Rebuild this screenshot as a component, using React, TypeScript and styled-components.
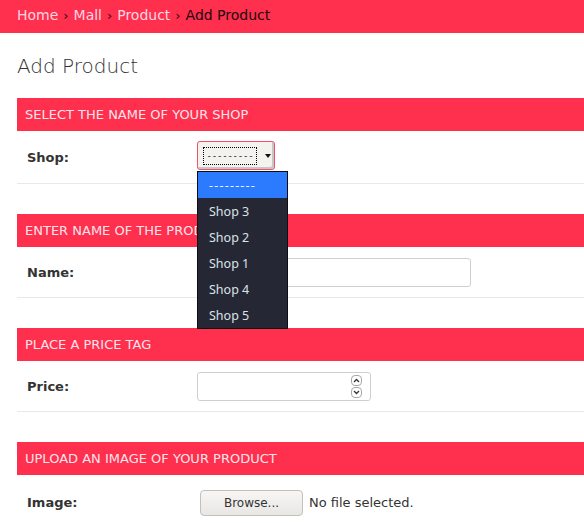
import React from "react";
import styled, { createGlobalStyle } from "styled-components";

const Global = createGlobalStyle`
  html, body { margin: 0; padding: 0; background: #fff; overflow: hidden; }
  body { font-family: "DejaVu Sans", sans-serif; color: #333; }
`;

const RED = "#ff2f4e";

const Breadcrumb = styled.nav`
  height: 33px;
  box-sizing: border-box;
  padding: 0 0 3px 17px;
  background: ${RED};
  display: flex;
  align-items: center;
  font-size: 14px;
  color: #ffd6e0;
`;

const Sep = styled.span`
  color: #3a0b14;
  font-size: 13px;
  margin: 0 5px;
`;

const Current = styled.span`
  color: #1b0a0e;
`;

const Main = styled.main`
  padding-left: 17px;
`;

const Title = styled.h1`
  margin: 0;
  padding: 20px 0 19px;
  font-size: 20px;
  font-weight: 200;
  color: #333;
  line-height: 26px;
  height: 26px;
`;

const Section = styled.section`
  margin-bottom: 30px;
`;

const Band = styled.div`
  height: 33px;
  background: ${RED};
  color: #fde4ea;
  font-size: 13px;
  display: flex;
  align-items: center;
  padding-left: 8px;
`;

const Row = styled.div<{ $h: number }>`
  display: flex;
  align-items: center;
  height: ${(p) => p.$h}px;
  border-bottom: 1px solid #e8e8e8;
`;

const Label = styled.label`
  width: 180px;
  padding-left: 10px;
  box-sizing: border-box;
  font-weight: bold;
  font-size: 13px;
  color: #333;
`;

const SelectWrap = styled.div`
  position: relative;
  align-self: flex-start;
  margin-top: 10px;
`;

const SelectBox = styled.div`
  width: 78px;
  height: 29px;
  box-sizing: border-box;
  border: 1px solid #f0506e;
  border-radius: 3px;
  background: #f4f2ef;
  box-shadow: inset -2px -2px 0 #c9c7c4;
  display: flex;
  align-items: center;
  padding-left: 5px;
`;

const Focus = styled.div`
  width: 54px;
  height: 18px;
  box-sizing: border-box;
  border: 1px dotted #000;
  display: flex;
  align-items: center;
  justify-content: center;
  font-family: "DejaVu Sans Mono", monospace;
  font-size: 9px;
  letter-spacing: -0.2px;
  color: #111;
`;

const Arrow = styled.span`
  margin-left: 8px;
  width: 0;
  height: 0;
  border-left: 3px solid transparent;
  border-right: 3px solid transparent;
  border-top: 4px solid #111;
`;

const Menu = styled.ul`
  position: absolute;
  left: 0;
  top: 30px;
  width: 91px;
  margin: 0;
  padding: 0;
  list-style: none;
  background: #252834;
  border: 1px solid #0c0d12;
  box-sizing: border-box;
  z-index: 5;
  font-family: "Noto Sans", sans-serif;
  font-size: 12.5px;
`;

const Option = styled.li<{ $active?: boolean }>`
  height: 26px;
  display: flex;
  align-items: center;
  padding-left: 11px;
  color: ${(p) => (p.$active ? "#eef4ff" : "#dbe2ea")};
  background: ${(p) => (p.$active ? "#2c7bff" : "transparent")};
  letter-spacing: ${(p) => (p.$active ? "1.2px" : "0")};
`;

const TextInput = styled.div<{ $w: number }>`
  width: ${(p) => p.$w}px;
  height: 29px;
  box-sizing: border-box;
  border: 1px solid #cfcfcf;
  border-radius: 3px;
  background: #fff;
  display: flex;
  justify-content: flex-end;
  align-items: center;
  padding-right: 8px;
`;

const Spinner = styled.div`
  display: flex;
  flex-direction: column;
  gap: 1px;
`;

const SpinBtn = styled.span`
  width: 11px;
  height: 11px;
  box-sizing: border-box;
  border: 1px solid #a8a8a8;
  border-radius: 4px;
  display: flex;
  align-items: center;
  justify-content: center;
`;

const Browse = styled.button`
  margin-left: 3px;
  width: 103px;
  height: 26px;
  border: 1px solid #c3c0bb;
  border-radius: 4px;
  background: linear-gradient(#f7f6f4, #e9e7e4);
  font-family: "DejaVu Sans", sans-serif;
  font-size: 12px;
  color: #333;
  padding: 0;
`;

const FileText = styled.span`
  margin-left: 6px;
  font-size: 13px;
  color: #333;
`;

const Chev = ({ up }: { up?: boolean }) => (
  <svg width="7" height="5" viewBox="0 0 7 5">
    <path
      d={up ? "M1 4 L3.5 1.5 L6 4" : "M1 1 L3.5 3.5 L6 1"}
      fill="none"
      stroke="#333"
      strokeWidth="1.3"
    />
  </svg>
);

export default function App() {
  return (
    <>
      <Global />
      <Breadcrumb>
        <span>Home</span>
        <Sep>›</Sep>
        <span>Mall</span>
        <Sep>›</Sep>
        <span>Product</span>
        <Sep>›</Sep>
        <Current>Add Product</Current>
      </Breadcrumb>
      <Main>
        <Title>Add Product</Title>
        <Section>
          <Band>SELECT THE NAME OF YOUR SHOP</Band>
          <Row $h={52}>
            <Label>Shop:</Label>
            <SelectWrap>
              <SelectBox>
                <Focus>---------</Focus>
                <Arrow />
              </SelectBox>
              <Menu>
                <Option $active>---------</Option>
                <Option>Shop 3</Option>
                <Option>Shop 2</Option>
                <Option>Shop 1</Option>
                <Option>Shop 4</Option>
                <Option>Shop 5</Option>
              </Menu>
            </SelectWrap>
          </Row>
        </Section>
        <Section>
          <Band>ENTER NAME OF THE PRODUCT</Band>
          <Row $h={50}>
            <Label>Name:</Label>
            <TextInput $w={274} />
          </Row>
        </Section>
        <Section>
          <Band>PLACE A PRICE TAG</Band>
          <Row $h={50}>
            <Label>Price:</Label>
            <TextInput $w={174}>
              <Spinner>
                <SpinBtn>
                  <Chev up />
                </SpinBtn>
                <SpinBtn>
                  <Chev />
                </SpinBtn>
              </Spinner>
            </TextInput>
          </Row>
        </Section>
        <Section>
          <Band>UPLOAD AN IMAGE OF YOUR PRODUCT</Band>
          <Row $h={55}>
            <Label>Image:</Label>
            <Browse>Browse...</Browse>
            <FileText>No file selected.</FileText>
          </Row>
        </Section>
      </Main>
    </>
  );
}
